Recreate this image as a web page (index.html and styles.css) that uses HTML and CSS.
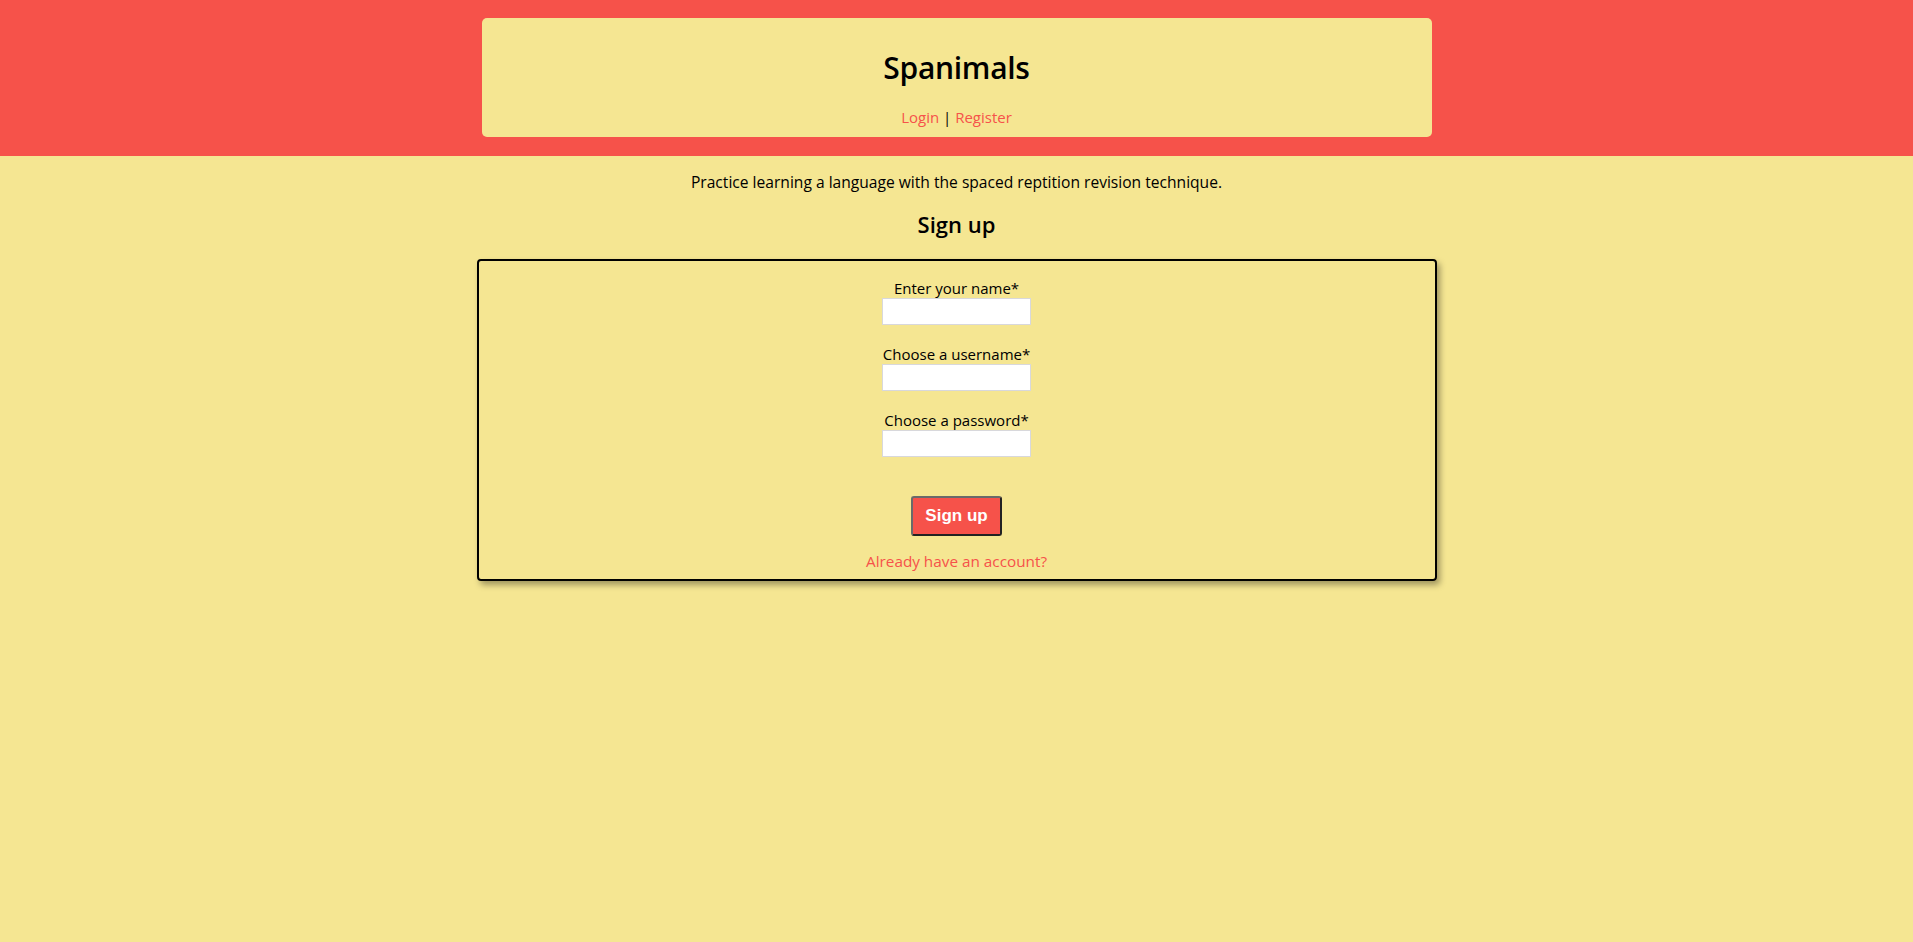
FILE: index.html
```html
<!DOCTYPE html>
<html lang="en">
<head>
<meta charset="utf-8">
<title>Spanimals</title>
<link rel="stylesheet" href="styles.css">
</head>
<body>
<header class="site-header">
  <div class="header-box">
    <h1 class="site-title">Spanimals</h1>
    <nav class="site-nav"><a href="#">Login</a> | <a href="#">Register</a></nav>
  </div>
</header>
<main class="main">
  <p class="intro">Practice learning a language with the spaced reptition revision technique.</p>
  <h2 class="page-title">Sign up</h2>
  <form class="signup-form">
    <div class="field">
      <label class="field-label" for="name">Enter your name*</label>
      <input class="field-input" id="name" type="text">
    </div>
    <div class="field">
      <label class="field-label" for="username">Choose a username*</label>
      <input class="field-input" id="username" type="text">
    </div>
    <div class="field">
      <label class="field-label" for="password">Choose a password*</label>
      <input class="field-input" id="password" type="password">
    </div>
    <button class="submit-btn" type="button">Sign up</button>
    <a class="alt-link" href="#">Already have an account?</a>
  </form>
</main>
</body>
</html>
```

FILE: styles.css
```css
* { box-sizing: border-box; }
html, body { margin: 0; padding: 0; }
body {
  background: #f5e692;
  font-family: "Open Sans", "Noto Sans", sans-serif;
  font-size: 15px;
  color: #000;
  min-height: 942px;
}
a { color: #f6524a; text-decoration: none; }

.site-header {
  background: #f6524a;
  padding: 18px 0 19px;
}
.header-box {
  width: 950px;
  margin: 0 auto;
  background: #f5e692;
  border-radius: 5px;
  padding: 31px 0 10px;
  text-align: center;
}
.site-title {
  margin: 0;
  font-size: 30px;
  line-height: 38px;
  font-weight: 600;
  letter-spacing: -0.3px;
}
.site-nav {
  margin-top: 20px;
  line-height: 20px;
  font-size: 15px;
}

.main {
  display: flex;
  flex-direction: column;
  align-items: center;
}
.intro {
  margin: 16px 0 0;
  line-height: 20px;
  font-size: 15.6px;
}
.page-title {
  margin: 18px 0 0;
  font-size: 22px;
  line-height: 28px;
  font-weight: 600;
}
.signup-form {
  margin-top: 21px;
  width: 960px;
  height: 322px;
  border: 2px solid #000;
  border-radius: 4px;
  box-shadow: 3px 4px 6px rgba(0, 0, 0, 0.35);
  padding: 18px 0 8px;
  display: flex;
  flex-direction: column;
  align-items: center;
}
.field {
  display: flex;
  flex-direction: column;
  align-items: center;
  margin-bottom: 20px;
}
.field:last-of-type { margin-bottom: 0; }
.field-label {
  line-height: 19px;
  font-size: 15px;
}
.field-input {
  width: 149px;
  height: 27px;
  border: 1px solid #d8d8dc;
  background: #fff;
  margin: 0;
  padding: 2px 4px;
  font: inherit;
}
.submit-btn {
  margin-top: 39px;
  width: 91px;
  height: 40px;
  background: #f6524a;
  color: #fff;
  font-family: "Liberation Sans", Arial, sans-serif;
  font-weight: bold;
  font-size: 17px;
  border: 2px solid;
  border-color: #6a6a6a #222 #222 #6a6a6a;
  border-radius: 3px;
  padding: 0;
}
.alt-link {
  margin-top: 15px;
  line-height: 20px;
  font-size: 15.3px;
}
```
